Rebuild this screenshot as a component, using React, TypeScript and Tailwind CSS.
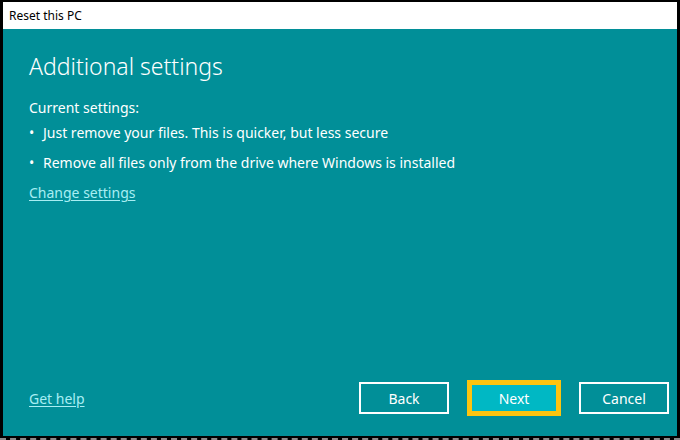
export default function App() {
  return (
    <div
      className="w-[680px] h-[440px] bg-black pt-[2px] pl-[3px] pr-[3px] pb-[2px] border-b-2 border-dashed border-[#8a8a8a] flex flex-col"
      style={{ fontFamily: '"Noto Sans", "Open Sans", sans-serif' }}
    >
      <div className="h-[27px] bg-white flex items-center pl-[6px] text-[12px] text-black shrink-0">
        Reset this PC
      </div>
      <div className="flex-1 bg-[#018f98] flex flex-col pl-[26px] pr-[8px] text-white">
        <h1 className="text-[23px] font-light mt-[21px] leading-[32px]">Additional settings</h1>
        <div className="text-[14px] mt-[16px] leading-[20px]">Current settings:</div>
        <ul className="text-[14px] leading-[20px]">
          <li className="flex mt-[5px]">
            <span className="w-[14px]">•</span>
            <span>Just remove your files. This is quicker, but less secure</span>
          </li>
          <li className="flex mt-[10px]">
            <span className="w-[14px]">•</span>
            <span>Remove all files only from the drive where Windows is installed</span>
          </li>
        </ul>
        <a className="text-[14px] leading-[20px] mt-[10px] text-[#a8eef3] underline underline-offset-2 self-start">
          Change settings
        </a>
        <div className="flex-1" />
        <div className="flex items-center mb-[20px]">
          <a className="text-[14px] text-[#a8eef3] underline underline-offset-2">Get help</a>
          <div className="flex-1" />
          <button className="w-[90px] h-[32px] border-2 border-white text-[14px] text-white">Back</button>
          <button className="ml-[18px] w-[94px] h-[36px] border-[5px] border-[#fdc40f] bg-[#00b8c4] text-[14px] text-white">
            Next
          </button>
          <button className="ml-[18px] w-[90px] h-[32px] border-2 border-white text-[14px] text-white">Cancel</button>
        </div>
      </div>
    </div>
  );
}
